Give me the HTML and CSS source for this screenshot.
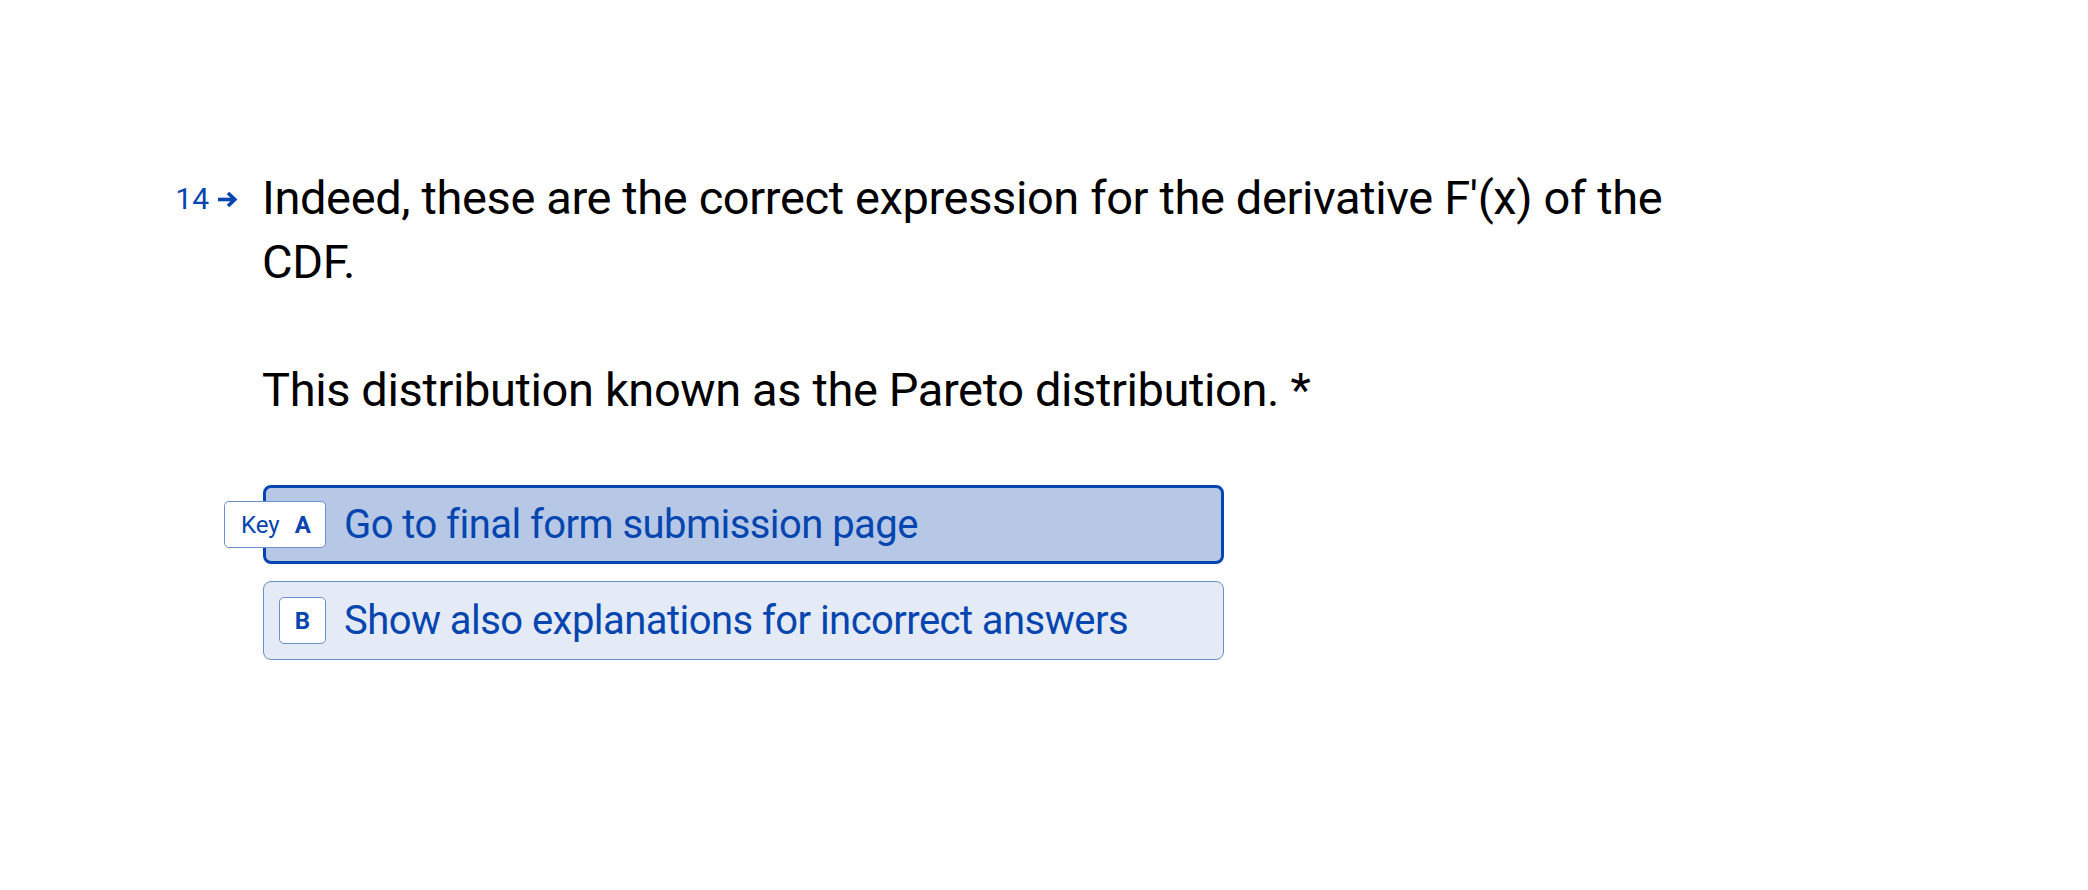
FILE: index.html
```html
<!DOCTYPE html>
<html lang="en">
<head>
<meta charset="utf-8">
<title>Question 14</title>
<link rel="stylesheet" href="styles.css">
</head>
<body>
<main class="page">
  <section class="question">
    <div class="counter">
      <span class="num">14</span>
      <svg class="arrow" width="21" height="17" viewBox="0 0 21 17" aria-hidden="true">
        <path d="M1 8.5 H17.5" />
        <path d="M11 2 L17.8 8.5 L11 15" />
      </svg>
    </div>
    <div class="body">
      <h1 class="title">Indeed, these are the correct expression for the derivative F'(x) of the CDF.<br><br>This distribution known as the Pareto distribution. *</h1>
      <div class="choices">
        <button class="choice selected" type="button">
          <span class="key wide"><span class="key-label">Key</span><b>A</b></span>
          <span class="choice-text">Go to final form submission page</span>
        </button>
        <button class="choice" type="button">
          <span class="key"><b>B</b></span>
          <span class="choice-text">Show also explanations for incorrect answers</span>
        </button>
      </div>
    </div>
  </section>
</main>
</body>
</html>
```
FILE: styles.css
```css
* { box-sizing: border-box; }
html, body {
  margin: 0;
  padding: 0;
  background: #ffffff;
}
body {
  font-family: Roboto, Inter, "Liberation Sans", sans-serif;
  color: #000;
}
.page {
  padding-top: 166px;
}
.question {
  display: flex;
  align-items: flex-start;
}
.counter {
  width: 262px;
  flex: none;
  display: flex;
  justify-content: flex-end;
  align-items: center;
  gap: 8px;
  padding-right: 24px;
  padding-top: 17px;
  color: #0445AF;
  font-size: 30px;
  line-height: 32px;
}
.arrow {
  fill: none;
  stroke: #0445AF;
  stroke-width: 3.6;
  stroke-linecap: butt;
  stroke-linejoin: miter;
}
.body {
  flex: none;
  width: 1440px;
}
.title {
  margin: 0;
  font-weight: 400;
  font-size: 47px;
  line-height: 64px;
  letter-spacing: -0.38px;
  max-width: 1440px;
}
.choices {
  margin-top: 63px;
  display: flex;
  flex-direction: column;
  gap: 17px;
  width: 961px;
  margin-left: 1px;
}
.choice {
  display: flex;
  align-items: center;
  gap: 18px;
  width: 100%;
  height: 79px;
  padding: 0 15px;
  border: 1px solid #688FCF;
  border-radius: 8px;
  background: #E5EBF6;
  color: #0445AF;
  font-family: inherit;
  font-size: 40px;
  text-align: left;
  cursor: pointer;
}
.choice.selected {
  border: 3px solid #0445AF;
  padding: 0 13px;
  background: #B6C8E6;
}
.key {
  flex: none;
  display: flex;
  align-items: center;
  justify-content: center;
  width: 47px;
  height: 47px;
  border: 1.5px solid #6B8FCF;
  border-radius: 5px;
  background: #fff;
  color: #0445AF;
  font-size: 24px;
}
.key b { font-weight: 700; }
.key.wide {
  width: 102px;
  margin-left: -55px;
  justify-content: flex-start;
  padding-left: 16px;
  gap: 15px;
}
.key-label { font-weight: 400; }
.choice-text {
  line-height: 48px;
  letter-spacing: -0.55px;
  white-space: nowrap;
}
```
